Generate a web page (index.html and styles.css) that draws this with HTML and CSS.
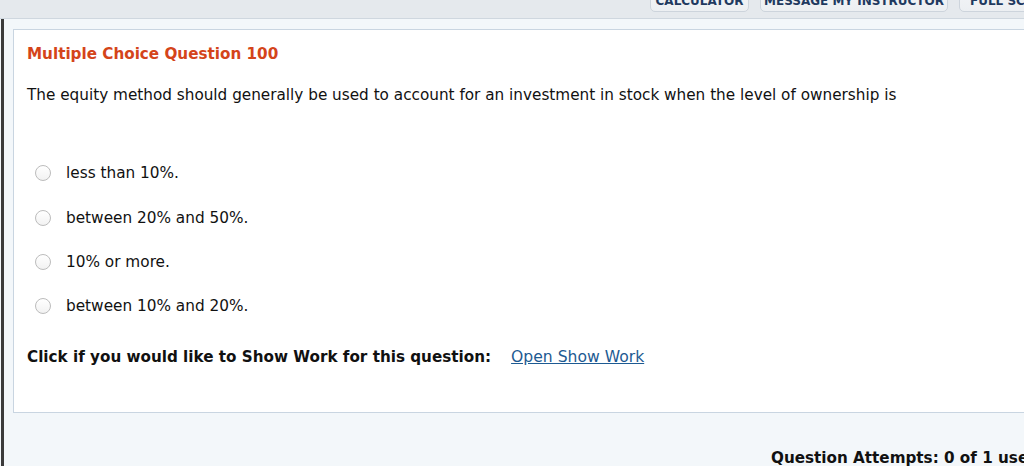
FILE: index.html
```html
<!DOCTYPE html>
<html>
<head>
<meta charset="utf-8">
<link rel="stylesheet" href="styles.css">
</head>
<body>
<div class="page">
  <div class="topbar">
    <div class="tb-btn tb-calc">Calculator</div>
    <div class="tb-btn tb-msg">Message My Instructor</div>
    <div class="tb-btn tb-full">Full Screen</div>
  </div>
  <div class="main">
    <div class="card">
      <h2 class="q-title">Multiple Choice Question 100</h2>
      <p class="q-text">The equity method should generally be used to account for an investment in stock when the level of ownership is</p>
      <div class="options">
        <label class="option"><span class="radio"></span><span class="opt-text">less than 10%.</span></label>
        <label class="option"><span class="radio"></span><span class="opt-text">between 20% and 50%.</span></label>
        <label class="option"><span class="radio"></span><span class="opt-text">10% or more.</span></label>
        <label class="option"><span class="radio"></span><span class="opt-text">between 10% and 20%.</span></label>
      </div>
      <div class="show-work">
        <span class="sw-label">Click if you would like to Show Work for this question:</span>
        <a class="sw-link" href="#">Open Show Work</a>
      </div>
    </div>
    <div class="attempts">Question Attempts: 0 of 1 used</div>
  </div>
</div>
</body>
</html>
```
FILE: styles.css
```css
html, body {
  margin: 0;
  padding: 0;
  overflow: hidden;
  background: #f3f7fa;
}
body {
  font-family: "DejaVu Sans", Verdana, sans-serif;
  color: #111;
  width: 1024px;
  height: 466px;
}
.page {
  width: 1140px;
}
.topbar {
  height: 18px;
  background: #e5e9ed;
  border-bottom: 1px solid #cfd7df;
  display: flex;
  align-items: flex-end;
  gap: 11px;
  padding-left: 650px;
  overflow: hidden;
}
.tb-btn {
  height: 30px;
  margin-bottom: 6px;
  box-sizing: border-box;
  padding: 10px 0 0;
  line-height: 16px;
  font-size: 12px;
  font-weight: bold;
  text-align: center;
  text-transform: uppercase;
  color: #1f3a60;
  background: linear-gradient(#f4f6f8, #eceff2);
  border: 1px solid #cdd4dc;
  border-radius: 0 0 5px 5px;
  white-space: nowrap;
  overflow: hidden;
  flex: none;
}
.tb-calc { width: 99px; }
.tb-msg { width: 188px; }
.tb-full { width: 120px; padding-left: 10px; text-align: left; }
.main {
  margin-left: 1px;
  border-left: 3px solid #3b3b3b;
  height: 447px;
  padding-top: 10px;
  box-sizing: border-box;
}
.card {
  margin-left: 9px;
  background: #fff;
  border: 1px solid #c9d5e1;
  padding: 15px 13px 46px;
  width: 1080px;
}
.q-title {
  margin: 0;
  font-size: 15.2px;
  line-height: 18px;
  font-weight: bold;
  color: #d4441a;
}
.q-text {
  margin: 23px 0 0;
  font-size: 15.25px;
  line-height: 18px;
}
.options {
  margin-top: 47px;
  display: flex;
  flex-direction: column;
}
.option {
  height: 44.4px;
  display: flex;
  align-items: center;
  font-size: 15.3px;
  line-height: 18px;
}
.radio {
  width: 14px;
  height: 14px;
  border: 1px solid #bcbcbc;
  border-radius: 50%;
  background: linear-gradient(#fff, #f2f2f2);
  margin-left: 8px;
  margin-right: 15px;
  flex: none;
}
.show-work {
  margin-top: 19px;
  display: flex;
  align-items: center;
  line-height: 18px;
}
.sw-label {
  font-weight: bold;
  font-size: 15.2px;
}
.sw-link {
  margin-left: 20px;
  color: #1d5a92;
  font-size: 15.6px;
  text-decoration: underline;
}
.attempts {
  margin-top: 36px;
  padding-left: 767px;
  font-weight: bold;
  font-size: 15.2px;
  line-height: 18px;
  white-space: nowrap;
}
```
